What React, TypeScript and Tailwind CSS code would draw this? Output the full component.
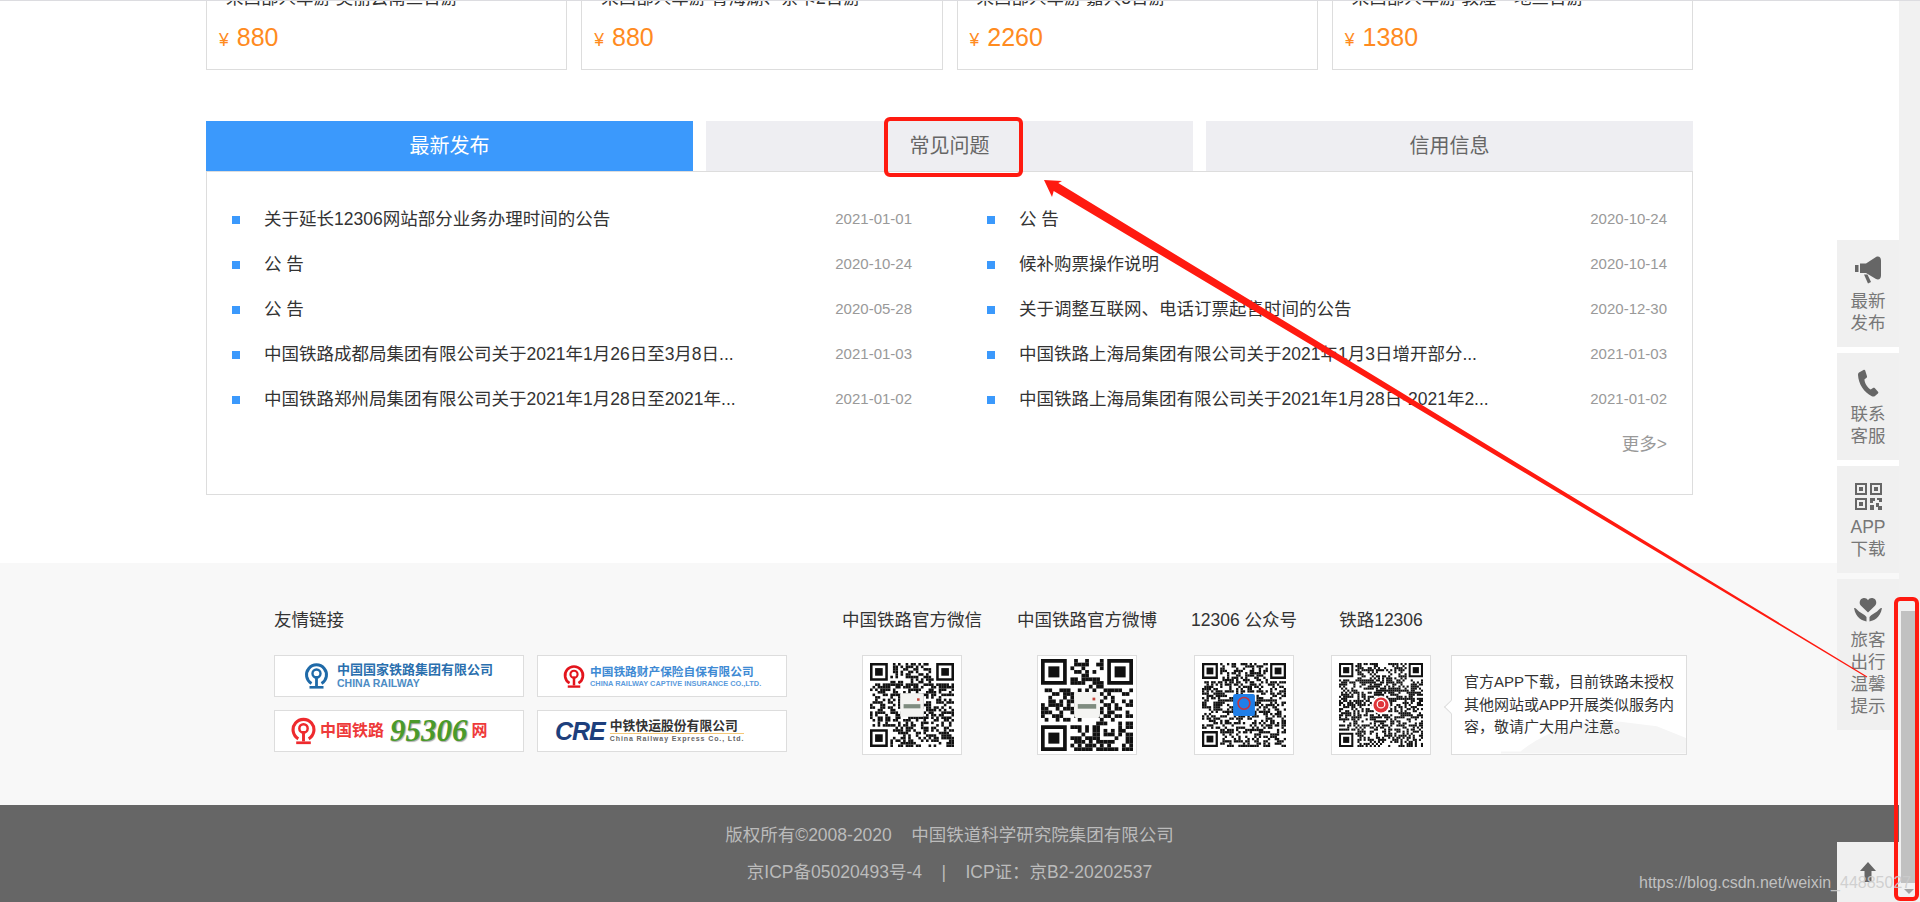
import React from 'react';

const leftNews = [
  { title: '关于延长12306网站部分业务办理时间的公告', date: '2021-01-01' },
  { title: '公 告', date: '2020-10-24' },
  { title: '公 告', date: '2020-05-28' },
  { title: '中国铁路成都局集团有限公司关于2021年1月26日至3月8日...', date: '2021-01-03' },
  { title: '中国铁路郑州局集团有限公司关于2021年1月28日至2021年...', date: '2021-01-02' },
];

const rightNews = [
  { title: '公 告', date: '2020-10-24' },
  { title: '候补购票操作说明', date: '2020-10-14' },
  { title: '关于调整互联网、电话订票起售时间的公告', date: '2020-12-30' },
  { title: '中国铁路上海局集团有限公司关于2021年1月3日增开部分...', date: '2021-01-03' },
  { title: '中国铁路上海局集团有限公司关于2021年1月28日-2021年2...', date: '2021-01-02' },
];

const trips = [
  { title: '来西部人车游 美丽云南三日游', price: '880' },
  { title: '来西部人车游 青海湖、茶卡2日游', price: '880' },
  { title: '来西部人车游 嘉兴8日游', price: '2260' },
  { title: '来西部人车游 敦煌一地三日游', price: '1380' },
];

function RailLogo({ color, className }: { color: string; className: string }) {
  return (
    <svg viewBox="0 0 24 28" className={className}>
      <path d="M7 21.5A10 10 0 1 1 17 21.5" fill="none" stroke={color} strokeWidth="3" />
      <circle cx="12" cy="11.5" r="4" fill="none" stroke={color} strokeWidth="2.4" />
      <rect x="10.6" y="14" width="2.8" height="10" fill={color} />
      <rect x="5" y="24" width="14" height="2.6" fill={color} />
    </svg>
  );
}

// pseudo random QR pattern, the finder squares are what make it read as a QR code
function Qr({ seed, modules, inset, center }: { seed: number; modules: number; inset: string; center: 'photo' | 'app' | 'red' }) {
  const cells: React.ReactNode[] = [];
  let s = seed;
  const next = () => {
    s = (s * 1103515245 + 12345) & 0x7fffffff;
    return (s >> 16) & 1;
  };
  for (let y = 0; y < modules; y++) {
    for (let x = 0; x < modules; x++) {
      const bit = next();
      const inFinder = (x < 8 && y < 8) || (x >= modules - 8 && y < 8) || (x < 8 && y >= modules - 8);
      if (bit && !inFinder) cells.push(<rect key={`${x}-${y}`} x={x} y={y} width="1.02" height="1.02" />);
    }
  }
  const finders = [
    [0, 0],
    [modules - 7, 0],
    [0, modules - 7],
  ];
  const c = modules / 2;
  return (
    <div className="w-[100px] h-[100px] border border-[#dddddd] bg-white flex items-center justify-center">
      <svg viewBox={`0 0 ${modules} ${modules}`} className={inset} fill="#111111">
        {cells}
        {finders.map(([x, y]) => (
          <g key={`${x}-${y}`}>
            <path d={`M${x} ${y}h7v7h-7zM${x + 1} ${y + 1}v5h5v-5z`} fillRule="evenodd" />
            <rect x={x + 2} y={y + 2} width="3" height="3" />
          </g>
        ))}
        {center === 'photo' && (
          <g>
            <rect x={c - modules * 0.14} y={c - modules * 0.14} width={modules * 0.28} height={modules * 0.28} rx="0.6" fill="#f4f4f2" />
            <rect x={c - modules * 0.1} y={c - modules * 0.01} width={modules * 0.2} height={modules * 0.05} fill="#7f8c80" />
            <rect x={c + modules * 0.06} y={c - modules * 0.08} width={modules * 0.03} height={modules * 0.03} fill="#c8453a" />
          </g>
        )}
        {center === 'app' && (
          <g>
            <rect x={c - modules * 0.13} y={c - modules * 0.13} width={modules * 0.26} height={modules * 0.26} rx="1" fill="#1f7fe8" />
            <circle cx={c} cy={c - modules * 0.02} r={modules * 0.07} fill="none" stroke="#c8323c" strokeWidth="0.7" />
          </g>
        )}
        {center === 'red' && (
          <g>
            <circle cx={c} cy={c} r={modules * 0.11} fill="#ffffff" />
            <circle cx={c} cy={c} r={modules * 0.09} fill="#e0353a" />
            <circle cx={c} cy={c - modules * 0.01} r={modules * 0.045} fill="none" stroke="#ffffff" strokeWidth="0.6" />
          </g>
        )}
      </svg>
    </div>
  );
}

function NewsColumn({ items }: { items: { title: string; date: string }[] }) {
  return (
    <ul>
      {items.map((item) => (
        <li key={item.title + item.date} className="flex items-center h-[45px]">
          <span className="w-2 h-2 bg-[#3b99fc] shrink-0" />
          <span className="ml-6 flex-1 whitespace-nowrap text-[17.5px] text-[#333333]">{item.title}</span>
          <span className="text-[15px] text-[#999999]">{item.date}</span>
        </li>
      ))}
    </ul>
  );
}

function MegaphoneIcon() {
  return (
    <svg viewBox="0 0 28 28" className="w-[28px] h-[28px]" fill="#666666">
      <rect x="1" y="9" width="3.5" height="7" />
      <path d="M6 7.5h6L22 1c2.500-1.300 5 0 5 3.500v15c0 3.500-2.500 4.800-5 3.500l-10-6H6z" />
      <path d="M10 18.500h3.500l3.500 7.500-3 1.500z" />
    </svg>
  );
}

function PhoneIcon() {
  return (
    <svg viewBox="0 0 22 28" className="w-[22px] h-[28px]" fill="#666666">
      <path d="M2 3.5 6.5 1c.8-.4 1.4-.1 1.700.6L10 7.200c.2.700 0 1.200-.5 1.600L7.400 10.400c.4 4 3 8 6.300 10l2.300-1.500c.6-.4 1.200-.3 1.700.2l3.300 3.600c.5.600.5 1.200-.1 1.700L18 27c-1 .7-2 .7-3.200.2C7 23.500 1.500 15 1 6c0-1 .3-2 1-2.500z" />
    </svg>
  );
}

function QrIcon() {
  return (
    <svg viewBox="0 0 27 27" className="w-[27px] h-[27px]" fill="#666666">
      <path fillRule="evenodd" d="M0 0h12v12H0zM2 2v8h8V2zM15 0h12v12H15zM17 2v8h8V2zM0 15h12v12H0zM2 17v8h8v-8z" />
      <rect x="4" y="4" width="4" height="4" />
      <rect x="19" y="4" width="4" height="4" />
      <rect x="4" y="19" width="4" height="4" />
      <path d="M15 15h5v3h-2v2h-3zM22 15h5v4h-3v-2h-2zM15 22h4v5h-4zM21 20h3v3h3v4h-4v-3h-2z" />
    </svg>
  );
}

function CareIcon() {
  return (
    <svg viewBox="0 0 28 25" className="w-[28px] h-[25px]" fill="#666666">
      <path d="M14 15.500 7 8.800C4.600 6.400 5.600 1.500 9.600 1c2-.2 3.400.7 4.400 2.300C15 1.700 16.400.8 18.400 1c4 .5 5 5.400 2.600 7.800z" />
      <path d="M0 11c2.500 0 3 2 5 3.500 2.500 2 5.500 2.500 7.500 5.500v4.500C9 23.500 2 22 0 11zM28 11c-2.500 0-3 2-5 3.500-2.500 2-5.500 2.500-7.500 5.500v4.500C19 23.500 26 22 28 11z" />
    </svg>
  );
}

const sideItems = [
  { lines: ['最新', '发布'], icon: <MegaphoneIcon />, height: 'h-[107px]' },
  { lines: ['联系', '客服'], icon: <PhoneIcon />, height: 'h-[107px]' },
  { lines: ['APP', '下载'], icon: <QrIcon />, height: 'h-[107px]' },
  { lines: ['旅客', '出行', '温馨', '提示'], icon: <CareIcon />, height: 'h-[151px]' },
];

export default function App() {
  return (
    <div className="relative h-[902px] overflow-hidden flex bg-white border-t border-[#dcdce0] font-['Liberation_Sans','Noto_Sans_CJK_SC',sans-serif]">
      <main className="w-[1899px] flex flex-col">
        <div className="w-[1487px] mx-auto">
          {/* trips, scrolled half out of view */}
          <div className="grid grid-cols-4 gap-[14px]">
            {trips.map((trip) => (
              <div key={trip.title} className="h-[69px] overflow-hidden border-x border-b border-[#dddddd] px-3">
                <p className="-mt-[18px] ml-[7px] h-[30px] leading-[30px] whitespace-nowrap text-[17.5px] text-[#333333]">{trip.title}</p>
                <p className="mt-[9px] h-[30px] leading-[30px] text-[#ff8b1f]">
                  <span className="text-[17.5px]">¥</span>
                  <span className="ml-2 text-[25px]">{trip.price}</span>
                </p>
              </div>
            ))}
          </div>

          <div className="mt-[51px] grid grid-cols-3 gap-[13px] h-[50px] text-[20px] leading-[50px] text-center">
            <div className="bg-[#3b99fc] text-white">最新发布</div>
            <div className="bg-[#eeeef2] text-[#666666]">常见问题</div>
            <div className="bg-[#eeeef2] text-[#666666]">信用信息</div>
          </div>

          <div className="border border-[#dddddd] pl-[25px] pr-[25px] pt-[25px] pb-[27px]">
            <div className="grid grid-cols-2 gap-x-[75px]">
              <NewsColumn items={leftNews} />
              <NewsColumn items={rightNews} />
            </div>
            <div className="h-[45px] flex items-center justify-end text-[17.5px] text-[#999999]">更多&gt;</div>
          </div>
        </div>

        <footer className="mt-[68px] h-[243px] bg-[#f8f8f8] pt-[42px]">
          <div className="w-[1487px] mx-auto flex text-[17.5px] text-[#333333]">
            <div className="ml-[68px] w-[513px]">
              <h3 className="h-[30px] leading-[30px]">友情链接</h3>
              <div className="mt-5 grid grid-cols-2 gap-x-[13px] gap-y-[13px]">
                <div className="h-[42px] border border-[#dddddd] bg-white flex items-center pl-[29px]">
                  <RailLogo color="#1f6aa8" className="w-[25px] h-[28px]" />
                  <div className="ml-2">
                    <p className="text-[13px] leading-[15px] font-bold text-[#2a6fae] whitespace-nowrap">中国国家铁路集团有限公司</p>
                    <p className="text-[10.5px] leading-[13px] font-bold text-[#4d8cc4] whitespace-nowrap">CHINA RAILWAY</p>
                  </div>
                </div>
                <div className="h-[42px] border border-[#dddddd] bg-white flex items-center pl-[25px]">
                  <RailLogo color="#e3141c" className="w-[22px] h-[25px]" />
                  <div className="ml-[5px]">
                    <p className="text-[11.7px] leading-[14px] font-bold text-[#3e8ad4] whitespace-nowrap">中国铁路财产保险自保有限公司</p>
                    <p className="text-[7.4px] leading-[9px] font-bold text-[#5b9bdc] whitespace-nowrap">CHINA RAILWAY CAPTIVE INSURANCE CO.,LTD.</p>
                  </div>
                </div>
                <div className="h-[42px] border border-[#dddddd] bg-white flex items-center pl-4">
                  <RailLogo color="#ee2a2e" className="w-[25px] h-[30px]" />
                  <span className="ml-1 text-[16px] font-bold text-[#ee3a3a]">中国铁路</span>
                  <span className="ml-[6px] text-[31px] leading-[34px] font-bold italic text-[#4a9a2a] [font-family:'Liberation_Serif',serif] [text-shadow:1px_1px_1px_#aaaaaa]">95306</span>
                  <span className="ml-1 text-[16px] font-bold text-[#ee3a3a]">网</span>
                </div>
                <div className="h-[42px] border border-[#dddddd] bg-white flex items-center pl-[17px]">
                  <span className="text-[25px] leading-[30px] font-bold italic tracking-[-1px] text-[#1d3f7c]">CRE</span>
                  <div className="ml-[5px]">
                    <p className="text-[12.8px] leading-[14px] font-bold text-[#333333] whitespace-nowrap">中铁快运股份有限公司</p>
                    <p className="border-t border-[#f4c878] text-[7px] leading-[9px] font-bold tracking-[0.9px] text-[#666666] whitespace-nowrap">China Railway Express Co., Ltd.</p>
                  </div>
                </div>
              </div>
            </div>

            <div className="ml-[55px] w-[140px] flex flex-col items-center">
              <h3 className="h-[30px] leading-[30px] whitespace-nowrap">中国铁路官方微信</h3>
              <div className="mt-5">
                <Qr seed={11} modules={33} inset="w-[84px] h-[84px] blur-[0.3px]" center="photo" />
              </div>
            </div>
            <div className="ml-[35px] w-[140px] flex flex-col items-center">
              <h3 className="h-[30px] leading-[30px] whitespace-nowrap">中国铁路官方微博</h3>
              <div className="mt-5">
                <Qr seed={29} modules={25} inset="w-[92px] h-[92px]" center="photo" />
              </div>
            </div>
            <div className="ml-[34px] w-[106px] flex flex-col items-center">
              <h3 className="h-[30px] leading-[30px] whitespace-nowrap">12306 公众号</h3>
              <div className="mt-5">
                <Qr seed={47} modules={37} inset="w-[84px] h-[84px] blur-[0.3px]" center="app" />
              </div>
            </div>
            <div className="ml-[34px] w-[100px] flex flex-col items-center">
              <h3 className="h-[30px] leading-[30px] whitespace-nowrap">铁路12306</h3>
              <div className="mt-5">
                <Qr seed={83} modules={41} inset="w-[84px] h-[84px] blur-[0.4px]" center="red" />
              </div>
            </div>

            <div className="relative ml-5 mt-[50px] w-[236px] h-[100px] border border-[#dddddd] bg-white pl-3 pt-[15px] text-[15px] leading-[22.5px] text-[#333333]">
              <span className="absolute -left-[6px] top-[46px] w-[10px] h-[10px] rotate-45 bg-white border-l border-b border-[#dddddd]" />
              <svg viewBox="0 0 190 40" className="absolute right-0 bottom-0 w-[185px] h-[40px]" fill="#f5f5f5">
                <path d="M20 38C40 22 70 8 110 6l50 6 30 12v14zM0 38h190v2H0z" />
              </svg>
              <p className="relative">官方APP下载，目前铁路未授权</p>
              <p className="relative">其他网站或APP开展类似服务内</p>
              <p className="relative">容，敬请广大用户注意。</p>
            </div>
          </div>
        </footer>

        <div className="h-[97px] bg-[#666666] text-center text-[17.5px] text-[#bbbbbb]">
          <p className="mt-[11px] h-[37px] leading-[38px]">版权所有©2008-2020&nbsp;&nbsp;&nbsp;&nbsp;中国铁道科学研究院集团有限公司</p>
          <p className="h-[38px] leading-[38px]">京ICP备05020493号-4&nbsp;&nbsp;&nbsp;&nbsp;|&nbsp;&nbsp;&nbsp;&nbsp;ICP证：京B2-20202537</p>
        </div>
      </main>

      {/* browser scrollbar */}
      <div className="w-[21px] bg-[#f1f1f1] flex flex-col items-start pl-[2px]">
        <div className="mt-[610px] w-[14px] h-[272px] bg-[#c1c1c1]" />
        <div className="mt-[6px] ml-[3px] w-0 h-0 border-x-[5px] border-x-transparent border-t-[5px] border-t-[#a3a3a3]" />
      </div>

      {/* floating side menu */}
      <div className="absolute right-[21px] top-[239px] w-[62px] flex flex-col gap-[6px]">
        {sideItems.map((item) => (
          <div key={item.lines[0]} className={`${item.height} bg-[#f0f0f0] flex flex-col items-center pt-[16px] text-[17.5px] leading-[22px] text-[#777777]`}>
            <div className="h-[28px] flex items-center justify-center">{item.icon}</div>
            <div className="mt-[6px] text-center">
              {item.lines.map((line) => (
                <p key={line}>{line}</p>
              ))}
            </div>
          </div>
        ))}
      </div>
      <div className="absolute right-[21px] bottom-0 w-[62px] h-[60px] bg-[#f0f0f0] flex items-center justify-center">
        <svg viewBox="0 0 16 20" className="w-4 h-5" fill="#666666">
          <path d="M8 0l8 9h-4.500v11h-7V9H0z" />
        </svg>
      </div>

      {/* annotations drawn on top of the screenshot */}
      <svg viewBox="0 0 1920 902" className="absolute left-0 -top-px w-[1920px] h-[902px] pointer-events-none" fill="none">
        <rect x="886" y="119" width="135" height="56" rx="4" stroke="#ff1a10" strokeWidth="4" />
        <rect x="1896" y="599" width="21" height="300" rx="4" stroke="#ff1a10" strokeWidth="4" />
        <polygon points="1044,180 1062,181 1058.3,183.1 1867.3,676.6 1866.7,677.4 1053.7,190.9 1052,197" fill="#ff1a10" />
      </svg>
      <span className="absolute left-[1639px] top-[872px] text-[16px] leading-[20px] whitespace-nowrap text-[#cccccc]/90">https://blog.csdn.net/weixin_44885027</span>
    </div>
  );
}
